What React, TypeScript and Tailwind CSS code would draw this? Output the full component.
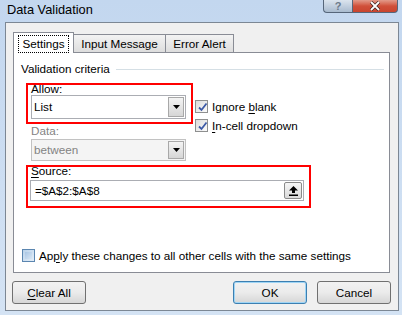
import type { ReactNode } from 'react';

function U({ children }: { children: ReactNode }) {
  return <span className="underline decoration-1 underline-offset-[2px]">{children}</span>;
}

function CheckBox({ checked, blue }: { checked?: boolean; blue?: boolean }) {
  return (
    <span
      className={`relative flex h-[13px] w-[13px] shrink-0 items-center justify-center border ${
        blue ? 'border-[#5b86b0] bg-gradient-to-br from-[#b9d2ea] to-[#e4eef8]' : 'border-[#8e8f8f] bg-gradient-to-br from-[#dcdcdc] to-[#fbfbfb]'
      }`}
    >
      {blue && <span className="h-[7px] w-[7px] bg-gradient-to-br from-[#a9c6e4] to-[#d8e6f4]" />}
      {checked && (
        <svg width="11" height="11" viewBox="0 0 11 11" className="absolute left-px top-px">
          <path d="M2 5.5 L4.5 8 L9.5 1.5" fill="none" stroke="#3d5aa6" strokeWidth="1.8" />
        </svg>
      )}
    </span>
  );
}

function DropButton() {
  return (
    <div className="my-px mr-px flex w-[16px] items-center justify-center border border-[#a8a8a8] bg-gradient-to-b from-[#f4f4f4] to-[#d6d6d6]">
      <svg width="7" height="4" viewBox="0 0 7 4">
        <path d="M0 0 H7 L3.5 4 Z" fill="#000" />
      </svg>
    </div>
  );
}

function Combo({ value, disabled }: { value: string; disabled?: boolean }) {
  return (
    <div
      className={`flex h-full items-stretch border ${
        disabled ? 'border-[#c2c2c2] bg-[#f4f4f4] text-[#838383]' : 'border-[#abadb3] bg-white text-black'
      }`}
    >
      <div className="flex flex-1 items-center pl-[2px]">{value}</div>
      <DropButton />
    </div>
  );
}

function WinButton({ children, primary }: { children: ReactNode; primary?: boolean }) {
  return (
    <div
      className={`flex h-[23px] w-[74px] items-center justify-center rounded-[3px] border bg-gradient-to-b from-[#f2f2f2] via-[#ebebeb] to-[#d6d6d6] ${
        primary ? 'border-[#3c7fb1] shadow-[inset_0_0_0_1px_#9fd5f5]' : 'border-[#707070]'
      }`}
    >
      {children}
    </div>
  );
}

export default function App() {
  return (
    <div className="relative h-[315px] w-[402px] overflow-hidden bg-gradient-to-b from-[#c3d7ef] to-[#d4e3f4] font-['Liberation_Sans',Arial,sans-serif] text-[11.7px] leading-[14px] text-black">
      {/* Title bar */}
      <div className="flex h-[22px] items-start justify-between">
        <div className="pl-[7px] pt-[3px] text-[12.8px] leading-[14px]">Data Validation</div>
        <div className="mr-[4px] flex">
          <div className="flex h-[13px] w-[29px] items-center justify-center rounded-bl-[4px] border border-r-0 border-t-0 border-[#56667a] bg-gradient-to-b from-[#dbe4ee] to-[#a9bbcf] text-[11px] font-bold leading-none text-[#6b7a8a]">
            ?
          </div>
          <div className="flex h-[13px] w-[46px] items-center justify-center rounded-br-[4px] border border-t-0 border-[#56667a] bg-gradient-to-b from-[#e29a8a] via-[#d0503a] to-[#c9452f]">
            <svg width="12" height="10" viewBox="0 0 12 10">
              <path d="M2 1 L10 9 M10 1 L2 9" stroke="#3a2420" strokeWidth="3.2" />
              <path d="M2 1 L10 9 M10 1 L2 9" stroke="#fff" strokeWidth="1.8" />
            </svg>
          </div>
        </div>
      </div>

      {/* Dialog body */}
      <div className="ml-[5px] flex h-[289px] w-[394px] flex-col border border-[#7c8794] bg-[#f0f0f0]">
        {/* Tabs */}
        <div className="flex items-end pl-[7px] pt-[9px]">
          <div className="relative z-10 flex h-[21px] w-[61px] items-start justify-center border border-b-0 border-[#898c95] bg-white pt-[2px]">
            <span className="border border-dotted border-black px-[3px] py-px leading-[14px]">Settings</span>
          </div>
          <div className="-ml-px flex h-[19px] w-[93px] items-center justify-center border border-b-0 border-[#898c95] bg-gradient-to-b from-[#f3f3f3] to-[#dcdcdc]">
            Input Message
          </div>
          <div className="-ml-px flex h-[19px] w-[69px] items-center justify-center border border-b-0 border-[#898c95] bg-gradient-to-b from-[#f3f3f3] to-[#dcdcdc]">
            Error Alert
          </div>
        </div>

        {/* Tab panel */}
        <div className="relative -mt-px ml-[7px] flex h-[221px] w-[377px] flex-col border border-[#898c95] bg-white">
          <div className="ml-[7px] mr-[5px] mt-[9px] flex h-[14px] items-center gap-[6px]">
            <span>Validation criteria</span>
            <div className="h-px flex-1 bg-[#d5dfe5]" />
          </div>

          <div className="ml-[17px] flex">
            <div className="flex w-[155px] flex-col">
              <div className="mt-[6px] h-[13px] leading-[13px]">
                <U>A</U>llow:
              </div>
              <div className="h-[24px]">
                <Combo value="List" />
              </div>
              <div className="mt-[5px] h-[13px] leading-[13px] text-[#838383]">Data:</div>
              <div className="mt-[2px] h-[22px]">
                <Combo value="between" disabled />
              </div>
            </div>
            <div className="ml-[9px] mt-[21px] flex flex-col">
              <div className="flex h-[19px] items-center gap-[4px]">
                <CheckBox checked />
                <span>
                  Ignore <U>b</U>lank
                </span>
              </div>
              <div className="flex h-[19px] items-center gap-[4px]">
                <CheckBox checked />
                <span>
                  <U>I</U>n-cell dropdown
                </span>
              </div>
            </div>
          </div>

          <div className="ml-[16px] flex flex-col">
            <div className="mt-[3px] h-[13px] pl-px leading-[13px]">
              <U>S</U>ource:
            </div>
            <div className="mt-[3px] flex h-[21px] w-[274px] items-center border border-[#abadb3] bg-white">
              <span className="flex-1 pl-[4px]">=$A$2:$A$8</span>
              <div className="mr-px flex h-[17px] w-[18px] items-center justify-center rounded-[2px] border border-[#8a8a8a] bg-gradient-to-b from-[#f6f6f6] to-[#dadada]">
                <svg width="9" height="10" viewBox="0 0 9 10">
                  <path d="M4.5 0 L9 4.5 H6 V7 H3 V4.5 H0 Z" fill="#000" />
                  <rect x="0" y="8.5" width="9" height="1.5" fill="#000" />
                </svg>
              </div>
            </div>
          </div>

          <div className="ml-[8px] mt-[48px] flex h-[13px] items-center gap-[4px]">
            <CheckBox blue />
            <span>
              Ap<U>p</U>ly these changes to all other cells with the same settings
            </span>
          </div>
        </div>

        {/* Buttons */}
        <div className="mt-[8px] flex pl-[6px] pr-[7px]">
          <WinButton>
            <U>C</U>lear All
          </WinButton>
          <div className="flex-1" />
          <WinButton primary>OK</WinButton>
          <div className="w-[10px]" />
          <WinButton>Cancel</WinButton>
        </div>
      </div>

      {/* Red highlight annotations */}
      <div className="pointer-events-none absolute left-[26px] top-[83px] h-[41px] w-[167px] border-2 border-[#ff0000]" />
      <div className="pointer-events-none absolute left-[26px] top-[165px] h-[43px] w-[285px] border-2 border-[#ff0000]" />
    </div>
  );
}
